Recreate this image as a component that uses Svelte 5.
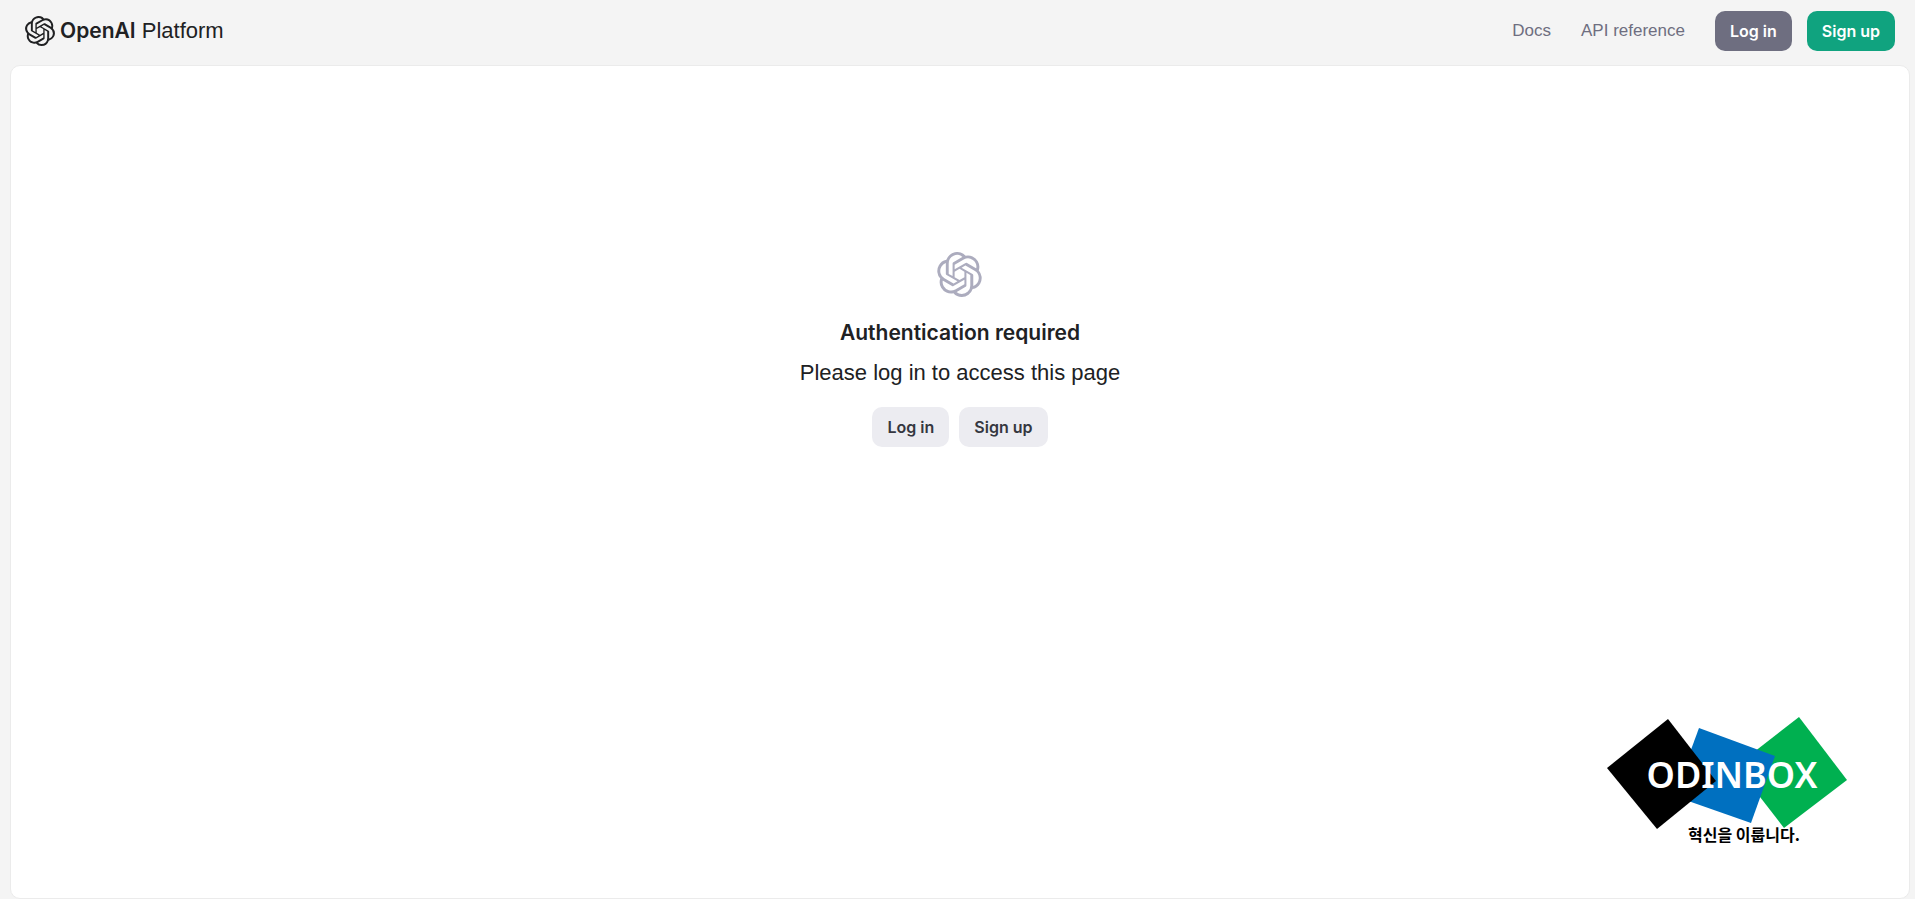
<script>
  const navLinks = [
    { label: 'Docs', href: '#docs' },
    { label: 'API reference', href: '#api-reference' }
  ];

  const logoPath =
    'M22.2819 9.8211a5.9847 5.9847 0 0 0-.5157-4.9108 6.0462 6.0462 0 0 0-6.5098-2.9A6.0651 6.0651 0 0 0 4.9807 4.1818a5.9847 5.9847 0 0 0-3.9977 2.9 6.0462 6.0462 0 0 0 .7427 7.0966 5.98 5.98 0 0 0 .511 4.9107 6.051 6.051 0 0 0 6.5146 2.9001A5.9847 5.9847 0 0 0 13.2599 24a6.0557 6.0557 0 0 0 5.7718-4.2058 5.9894 5.9894 0 0 0 3.9977-2.9001 6.0557 6.0557 0 0 0-.7475-7.0729zm-9.022 12.6081a4.4755 4.4755 0 0 1-2.8764-1.0408l.1419-.0804 4.7783-2.7582a.7948.7948 0 0 0 .3927-.6813v-6.7369l2.02 1.1686a.071.071 0 0 1 .038.052v5.5826a4.504 4.504 0 0 1-4.4945 4.4944zm-9.6607-4.1254a4.4708 4.4708 0 0 1-.5346-3.0137l.142.0852 4.783 2.7582a.7712.7712 0 0 0 .7806 0l5.8428-3.3685v2.3324a.0804.0804 0 0 1-.0332.0615L9.74 19.9502a4.4992 4.4992 0 0 1-6.1408-1.6464zM2.3408 7.8956a4.485 4.485 0 0 1 2.3655-1.9728V11.6a.7664.7664 0 0 0 .3879.6765l5.8144 3.3543-2.0201 1.1685a.0757.0757 0 0 1-.071 0l-4.8303-2.7865A4.504 4.504 0 0 1 2.3408 7.872zm16.5963 3.8558L13.1038 8.364 15.1192 7.2a.0757.0757 0 0 1 .071 0l4.8303 2.7913a4.4944 4.4944 0 0 1-.6765 8.1042v-5.6772a.79.79 0 0 0-.407-.667zm2.0107-3.0231l-.142-.0852-4.7735-2.7818a.7759.7759 0 0 0-.7854 0L9.409 9.2297V6.8974a.0662.0662 0 0 1 .0284-.0615l4.8303-2.7866a4.4992 4.4992 0 0 1 6.6802 4.66zM8.3065 12.863l-2.02-1.1638a.0804.0804 0 0 1-.038-.0567V6.0742a4.4992 4.4992 0 0 1 7.3757-3.4537l-.142.0805L8.704 5.459a.7948.7948 0 0 0-.3927.6813zm1.0976-2.3654l2.602-1.4998 2.6069 1.4998v2.9994l-2.5974 1.4997-2.6067-1.4997Z';
</script>

{#snippet logo(className)}
  <svg class={className} viewBox="0 0 24 24" fill="currentColor" aria-hidden="true">
    <path d={logoPath} />
  </svg>
{/snippet}

<div class="page">
  <header class="topbar">
    <a class="brand" href="#home">
      {@render logo('logo logo-small')}
      <span><strong>OpenAI</strong> Platform</span>
    </a>

    <nav class="nav">
      {#each navLinks as link}
        <a class="nav-link" href={link.href}>{link.label}</a>
      {/each}
    </nav>

    <div class="topbar-actions">
      <button type="button" class="btn btn-secondary">Log in</button>
      <button type="button" class="btn btn-primary">Sign up</button>
    </div>
  </header>

  <main class="panel">
    <section class="auth">
      {@render logo('logo logo-large')}
      <h1>Authentication required</h1>
      <p>Please log in to access this page</p>
      <div class="auth-actions">
        <button type="button" class="btn btn-neutral">Log in</button>
        <button type="button" class="btn btn-neutral">Sign up</button>
      </div>
    </section>

    <svg class="sponsor" viewBox="0 0 240 130" role="img" aria-label="ODINBOX">
      <polygon points="192,0 240,63 177,111 129,49" fill="#00b050" />
      <polygon points="92,11 168,39 144,106 67,79" fill="#0070c0" />
      <polygon points="61,2 109,64 50,112 0,51" fill="#000" />
      <text class="sponsor-name" x="125" y="71" text-anchor="middle">ODINBOX</text>
      <text class="sponsor-tagline" x="137" y="124" text-anchor="middle">혁신을 이룹니다.</text>
    </svg>
  </main>
</div>

<style>
  :global(body) {
    background: #f4f4f4;
  }

  .page {
    display: flex;
    flex-direction: column;
    box-sizing: border-box;
    min-height: 100vh;
    padding: 0 5px 0 10px;
    font-family: 'Liberation Sans', Arial, sans-serif;
    font-size: 17px;
    color: #202123;
  }

  .topbar {
    display: flex;
    align-items: center;
    box-sizing: border-box;
    height: 65px;
    padding: 0 15px 3px;
  }

  .brand {
    display: flex;
    align-items: center;
    gap: 5px;
    font-size: 22px;
    line-height: 28px;
    color: inherit;
    text-decoration: none;
  }

  .brand strong {
    font-family: Inter, 'Liberation Sans', sans-serif;
    font-size: 21px;
    font-weight: 600;
  }

  .logo-small {
    width: 30px;
    height: 30px;
  }

  .nav {
    display: flex;
    gap: 30px;
    margin-left: auto;
    margin-right: 30px;
  }

  .nav-link {
    color: #6e6e80;
    text-decoration: none;
  }

  .topbar-actions {
    display: flex;
    gap: 15px;
  }

  .btn {
    height: 40px;
    padding: 0 15px;
    border: 0;
    border-radius: 10px;
    font-family: Inter, 'Liberation Sans', sans-serif;
    font-size: 16px;
    font-weight: 600;
    color: #fff;
    cursor: pointer;
  }

  .btn-secondary {
    background: #6e6e80;
  }

  .btn-primary {
    background: #10a37f;
  }

  .btn-neutral {
    background: #ececf1;
    color: #353740;
  }

  .panel {
    flex: 1;
    display: flex;
    flex-direction: column;
    align-items: center;
    padding-top: 186px;
    border: 1px solid #ebebeb;
    border-radius: 10px;
    background: #fff;
  }

  .auth {
    display: flex;
    flex-direction: column;
    align-items: center;
    text-align: center;
  }

  .logo-large {
    width: 45px;
    height: 45px;
    color: #acacbe;
  }

  h1,
  p {
    margin: 0;
    line-height: 30px;
  }

  h1 {
    margin-top: 21px;
    font-family: Inter, 'Liberation Sans', sans-serif;
    font-size: 21px;
    font-weight: 600;
  }

  p {
    margin-top: 10px;
    font-size: 22px;
  }

  .auth-actions {
    display: flex;
    gap: 10px;
    margin-top: 19px;
  }

  .sponsor {
    align-self: flex-end;
    width: 240px;
    height: 130px;
    margin: auto 62px 51px 0;
  }

  .sponsor-name {
    font-family: 'Noto Sans', sans-serif;
    font-size: 36px;
    font-weight: 600;
    fill: #fff;
  }

  .sponsor-tagline {
    font-family: 'Noto Sans CJK KR', sans-serif;
    font-size: 16px;
    font-weight: 700;
    fill: #000;
  }
</style>
